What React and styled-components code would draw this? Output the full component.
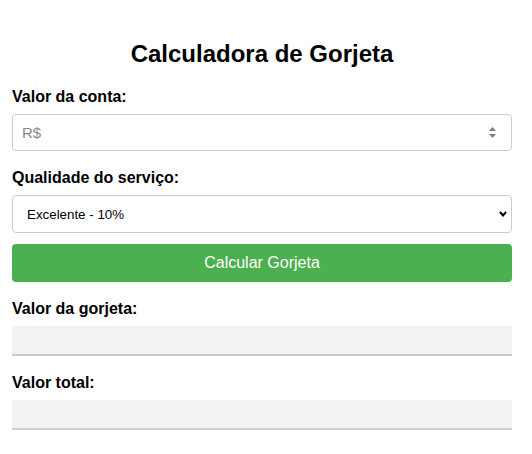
import React from 'react'
import styled, { createGlobalStyle } from 'styled-components'

const GlobalStyle = createGlobalStyle`
    body {
        margin: 0;
        background: #ffffff;
        font-family: "Liberation Sans", Arial, sans-serif;
        color: #000000;
    }
`

const Page = styled.div`
    padding: 0 12px;
`

const Container = styled.div`
    width: 500px;
`

const Title = styled.h2`
    margin: 40px 0 20px;
    font-size: 24px;
    line-height: 28px;
    font-weight: bold;
    text-align: center;
`

const Field = styled.div`
    margin-bottom: ${props => props.$spacing}px;
`

const Label = styled.label`
    display: block;
    font-size: 16px;
    line-height: 18px;
    font-weight: bold;
    margin-bottom: 8px;
`

const InputBox = styled.div`
    display: flex;
    align-items: center;
    height: 37px;
    box-sizing: border-box;
    border: 1px solid #cccccc;
    border-radius: 4px;
    background: #ffffff;
`

const Input = styled.input`
    flex: 1;
    min-width: 0;
    border: none;
    outline: none;
    background: transparent;
    padding: 0 9px;
    font-family: "Liberation Sans", Arial, sans-serif;
    font-size: 15px;
    color: #000000;

    &::placeholder {
        color: #8a8a8a;
    }
`

const Spinner = styled.svg`
    margin-right: 15px;
    flex-shrink: 0;
`

const SelectBox = styled.div`
    display: flex;
    align-items: center;
    height: 38px;
    box-sizing: border-box;
    border: 1px solid #cccccc;
    border-radius: 4px;
    background: #ffffff;
`

const Select = styled.select`
    flex: 1;
    appearance: none;
    border: none;
    outline: none;
    background: transparent;
    height: 100%;
    padding: 0 0 0 14px;
    font-family: "Liberation Sans", Arial, sans-serif;
    font-size: 13.333px;
    color: #000000;
`

const Chevron = styled.svg`
    margin-right: 4px;
    flex-shrink: 0;
`

const Button = styled.button`
    display: block;
    width: 100%;
    height: 38px;
    margin-bottom: 18px;
    border: none;
    border-radius: 4px;
    background: #4caf50;
    color: #ffffff;
    font-family: "Liberation Sans", Arial, sans-serif;
    font-size: 16px;
    cursor: pointer;
`

const Output = styled.div`
    height: 30px;
    box-sizing: border-box;
    background: #f2f2f2;
    border-bottom: 2px solid #cccccc;
`

export default function App() {
    return (
        <Page>
            <GlobalStyle />
            <Container>
                <Title>Calculadora de Gorjeta</Title>

                <Field $spacing={18}>
                    <Label htmlFor="conta">Valor da conta:</Label>
                    <InputBox>
                        <Input id="conta" type="text" placeholder="R$" />
                        <Spinner width="7" height="11" viewBox="0 0 7 11">
                            <polygon points="0,4 3.5,0 7,4" fill="#7d7d7d" />
                            <polygon points="0,7 7,7 3.5,11" fill="#7d7d7d" />
                        </Spinner>
                    </InputBox>
                </Field>

                <Field $spacing={11}>
                    <Label htmlFor="servico">Qualidade do serviço:</Label>
                    <SelectBox>
                        <Select id="servico" defaultValue="0.1">
                            <option value="0.1">Excelente - 10%</option>
                            <option value="0.08">Bom - 8%</option>
                            <option value="0.05">Regular - 5%</option>
                        </Select>
                        <Chevron width="8" height="6" viewBox="0 0 8 6">
                            <polyline points="1,1 4,4.5 7,1" fill="none" stroke="#000000" strokeWidth="2" />
                        </Chevron>
                    </SelectBox>
                </Field>

                <Button>Calcular Gorjeta</Button>

                <Field $spacing={18}>
                    <Label>Valor da gorjeta:</Label>
                    <Output />
                </Field>

                <Field $spacing={18}>
                    <Label>Valor total:</Label>
                    <Output />
                </Field>
            </Container>
        </Page>
    )
}
